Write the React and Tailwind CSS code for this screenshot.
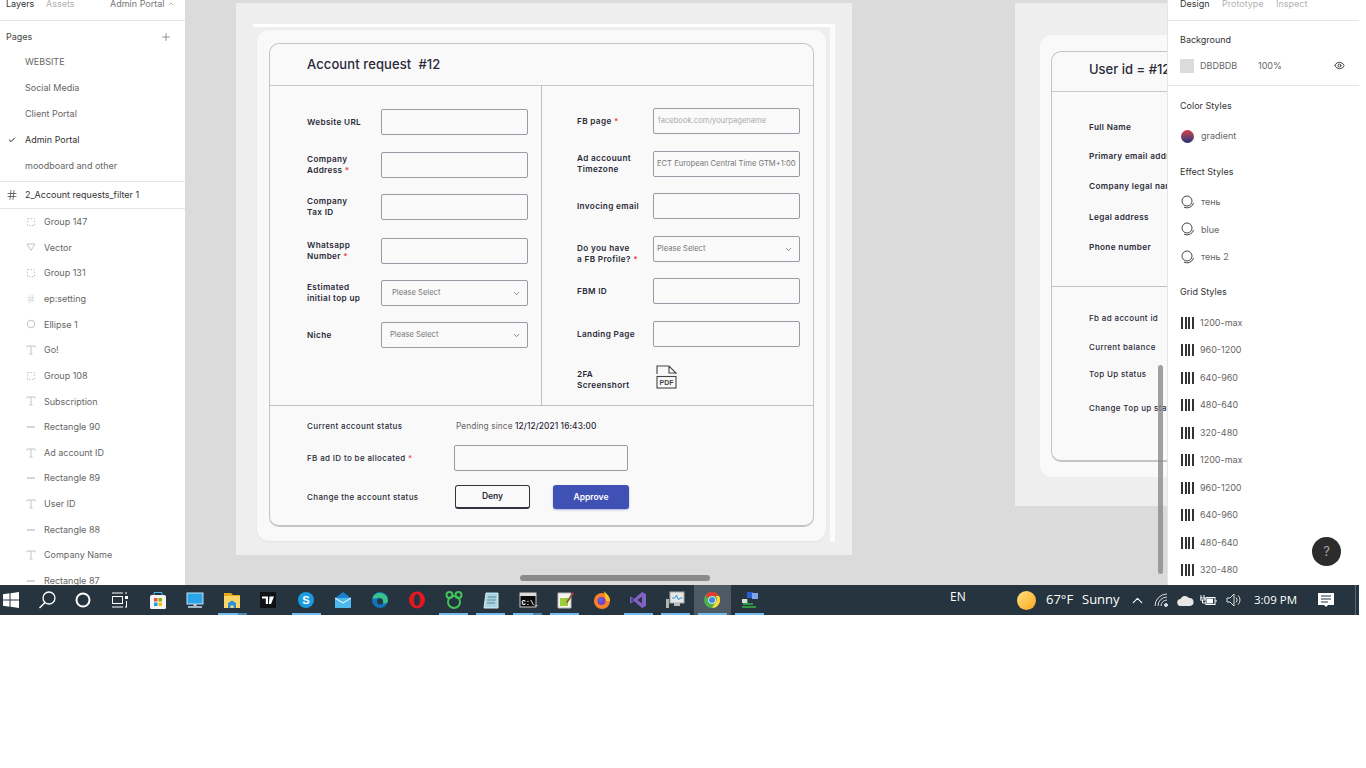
import React from "react";
import { Check, ChevronDown, ChevronUp, Eye, Hash, Plus } from "lucide-react";

const pages = ["WEBSITE", "Social Media", "Client Portal", "Admin Portal", "moodboard and other"];

const layers = [
  ["group", "Group 147"],
  ["vector", "Vector"],
  ["group", "Group 131"],
  ["frame", "ep:setting"],
  ["ellipse", "Ellipse 1"],
  ["text", "Go!"],
  ["group", "Group 108"],
  ["text", "Subscription"],
  ["line", "Rectangle 90"],
  ["text", "Ad account ID"],
  ["line", "Rectangle 89"],
  ["text", "User ID"],
  ["line", "Rectangle 88"],
  ["text", "Company Name"],
  ["line", "Rectangle 87"],
];

const gridStyles = ["1200-max", "960-1200", "640-960", "480-640", "320-480", "1200-max", "960-1200", "640-960", "480-640", "320-480"];

const font = "font-['Inter',sans-serif]";

const LayerIcon = ({ type }) => {
  if (type === "frame") return <Hash size={10} strokeWidth={1} className="text-[#b5b5b5]" />;
  return (
    <svg width="10" height="10" viewBox="0 0 10 10" fill="none" stroke="#c4c4c4" strokeWidth="1">
      {type === "group" && <rect x="1.5" y="1.5" width="7" height="7" strokeDasharray="1.5 1.5" />}
      {type === "vector" && <path d="M1 2h8L5 8.5z" />}
      {type === "ellipse" && <circle cx="5" cy="5" r="3.8" />}
      {type === "text" && <path d="M1 2.4V1h8v1.4M5 1v8M3.4 9h3.2" />}
      {type === "line" && <path d="M1 5h8" strokeWidth="1.4" />}
    </svg>
  );
};

const LeftPanel = () => (
  <aside className={`w-[185px] shrink-0 bg-white overflow-hidden ${font} text-[9px]`}>
    <div className="h-[21px] border-b border-[#e5e5e5] flex leading-[8px] pl-[6px] text-[#b3b3b3] whitespace-nowrap">
      <span className="text-[#333] w-[40px]">Layers</span>
      <span className="w-[64px]">Assets</span>
      <span className="text-[#777] w-[57px]">Admin Portal</span>
      <ChevronUp size={8} className="text-[#999]" />
    </div>
    <div className="h-[28px] pt-[3px] pl-[6px] pr-[13px] flex items-center justify-between text-[#444]">
      <span>Pages</span>
      <Plus size={12} strokeWidth={1} className="text-[#333]" />
    </div>
    <div className="pb-[2px] border-b border-[#e5e5e5]">
      {pages.map((p) => (
        <div key={p} className={`h-[26px] flex items-center relative pl-[25px] ${p === "Admin Portal" ? "text-[#333]" : "text-[#666]"}`}>
          {p === "Admin Portal" && <Check size={8} strokeWidth={3} className="absolute left-[8px] text-[#222]" />}
          {p}
        </div>
      ))}
    </div>
    <div className="h-[27px] border-b border-[#e5e5e5] flex items-center pl-[6px] gap-[7px] text-[#333]">
      <Hash size={12} strokeWidth={1.5} className="text-[#444]" />
      2_Account requests_filter 1
    </div>
    {layers.map(([type, name], i) => (
      <div key={i} className="h-[25.65px] flex items-center pl-[26px] gap-[8px] text-[#666]">
        <LayerIcon type={type} />
        {name}
      </div>
    ))}
  </aside>
);

const EffectIcon = () => (
  <svg width="14" height="14" viewBox="0 0 14 14" fill="none" stroke="#333" strokeWidth="0.9">
    <circle cx="6" cy="6" r="5" />
    <path d="M3 12.200A6.900 6.900 0 0 0 12.600 8" />
  </svg>
);

const GridIcon = () => (
  <div className="flex gap-[1.5px]">
    <span className="w-[2px] h-[12px] bg-[#333]" />
    <span className="w-[2px] h-[12px] bg-[#333]" />
    <span className="w-[2px] h-[12px] bg-[#333]" />
    <span className="w-[2px] h-[12px] bg-[#333]" />
  </div>
);

const RightPanel = () => (
  <aside className={`relative w-[192px] shrink-0 bg-white border-l border-[#e5e5e5] overflow-hidden ${font} text-[9px] text-[#666]`}>
    <div className="h-[21px] border-b border-[#e5e5e5] flex leading-[8px] pl-[12px] text-[#b3b3b3]">
      <span className="text-[#333] w-[42px]">Design</span>
      <span className="w-[54px]">Prototype</span>
      <span>Inspect</span>
    </div>
    <div className="h-[38px] flex items-center pl-[12px] text-[#333]">Background</div>
    <div className="h-[27px] pb-[13px] border-b border-[#e5e5e5] flex items-center pl-[12px]">
      <span className="w-[14px] h-[14px] bg-[#dbdbdb] mr-[6px]" />
      <span className="w-[58px]">DBDBDB</span>
      <span className="w-[76px]">100%</span>
      <Eye size={11} className="text-[#333]" />
    </div>
    <div className="h-[39px] flex items-center pl-[12px] text-[#333]">Color Styles</div>
    <div className="h-[22px] flex items-center pl-[13px] gap-[7px]">
      <span className="w-[13px] h-[13px] rounded-full bg-gradient-to-b from-[#d9363e] to-[#1c2a78]" />
      gradient
    </div>
    <div className="h-[41px] pt-[8px] flex items-center pl-[12px] text-[#333]">Effect Styles</div>
    {["тень", "blue", "тень 2"].map((n) => (
      <div key={n} className="h-[27.6px] flex items-center pl-[13px] gap-[6px]">
        <EffectIcon />
        {n}
      </div>
    ))}
    <div className="h-[38px] pt-[4px] flex items-center pl-[12px] text-[#333]">Grid Styles</div>
    {gridStyles.map((g, i) => (
      <div key={i} className="h-[27.5px] flex items-center pl-[13px] gap-[6.5px]">
        <GridIcon />
        {g}
      </div>
    ))}
    <div className="absolute left-[144px] top-[537px] w-[29px] h-[29px] rounded-full bg-[#2c2c2c] text-[#aaa] text-[13px] flex items-center justify-center">?</div>
  </aside>
);

const label = "font-semibold text-[8.2px] tracking-[0.35px] leading-[11px] text-[#2a2a38]";
const labelMedium = "font-medium text-[8px] tracking-[0.35px] leading-[11px] text-[#2a2a38]";
const Star = () => <span className="text-[#ef4444]"> *</span>;

const Field = ({ className = "", width = "w-[147px]", children }) => (
  <div className={`${width} h-[26px] shrink-0 rounded-[2px] border border-[#9a9aa5] bg-[#fafafa] flex items-center text-[7.6px] text-[#777] ${className}`}>
    {children}
  </div>
);

const SelectField = ({ pad }) => (
  <Field className={`justify-between pr-[6px] ${pad}`}>
    Please Select
    <ChevronDown size={9} strokeWidth={1.5} className="text-[#333] mt-[1px]" />
  </Field>
);

const Row = ({ text, className = "", children, w = "w-[74px]", labelClass = "" }) => (
  <div className={`flex items-center h-[26px] ${className}`}>
    <div className={`${w} shrink-0 ${label} ${labelClass}`}>{text}</div>
    {children}
  </div>
);

const PdfIcon = () => (
  <svg width="21" height="24" viewBox="0 0 21 24" fill="none" stroke="#444" strokeWidth="1.1">
    <path d="M1 9V1h12l7 7v1M13 1v7h7" />
    <rect x="1" y="11.500" width="19" height="11.500" />
    <text x="10.500" y="20" textAnchor="middle" fontSize="7" fontWeight="700" fontFamily="'Liberation Sans',sans-serif" fill="#444" stroke="none">PDF</text>
  </svg>
);

const RequestFrame = () => (
  <section className="relative w-[616px] h-[552px] shrink-0 ml-[51px] mt-[3px] bg-[#eeeeee] pt-[27px] pl-[21px]">
    <div className="absolute left-[17px] top-[21px] w-[582px] h-[3px] bg-white" />
    <div className="absolute left-[594px] top-[21px] w-[5px] h-[518px] bg-[#fbfbfb]" />
    <div className={`relative w-[569px] h-[511px] rounded-xl bg-[#f9f9f9] pl-[12px] pt-[13px] shadow-[0_1px_2px_rgba(0,0,0,0.06)] ${font}`}>
      <div className="w-[545px] h-[484px] rounded-[10px] border border-[#c4c4c8] border-b-2">
        <div className="h-[42px] border-b border-[#c8c8cc] flex items-center pl-[37px] text-[13px] tracking-[0.1px] font-medium text-[#2a2a38] whitespace-pre">
          Account request  #12
        </div>
        <div className="flex h-[320px] border-b border-[#c0c0c4]">
          <div className="w-[272px] border-r border-[#c0c0c4] pl-[37px] pt-[23px]">
            <Row text="Website URL"><Field /></Row>
            <Row text={<>Company<br />Address<Star /></>} className="mt-[17px]"><Field /></Row>
            <Row text={<>Company<br />Tax ID</>} className="mt-[16px]"><Field /></Row>
            <Row text={<>Whatsapp<br />Number<Star /></>} className="mt-[18px]"><Field /></Row>
            <Row text={<>Estimated<br />initial top up</>} className="mt-[16px]"><SelectField pad="pl-[10px]" /></Row>
            <Row text="Niche" className="mt-[16px]"><SelectField pad="pl-[8px]" /></Row>
          </div>
          <div className="flex-1 pl-[35px] pt-[22px]">
            <Row text={<>FB page<Star /></>} w="w-[76px]"><Field className="pl-[4px] text-[#aaa]">facebook.com/yourpagename</Field></Row>
            <Row text={<>Ad accouunt<br />Timezone</>} w="w-[76px]" className="mt-[17px]"><Field className="pl-[3px] whitespace-nowrap overflow-hidden">ECT European Central Time GTM+1:00</Field></Row>
            <Row text="Invocing email" w="w-[76px]" className="mt-[16px]"><Field /></Row>
            <Row text={<>Do you have<br />a FB Profile?<Star /></>} w="w-[76px]" labelClass="mt-[9px]" className="mt-[17px]"><SelectField pad="pl-[3px]" /></Row>
            <Row text="FBM ID" w="w-[76px]" className="mt-[16px]"><Field /></Row>
            <Row text="Landing Page" w="w-[76px]" className="mt-[17px]"><Field /></Row>
            <Row text={<>2FA<br />Screenshort</>} w="w-[79px]" labelClass="mt-[5px]" className="mt-[17px]"><PdfIcon /></Row>
          </div>
        </div>
        <div className="pl-[37px] pt-[14px]">
          <div className="flex items-center h-[12px]">
            <div className={`w-[149px] ${labelMedium}`}>Current account status</div>
            <div className="text-[8.3px] text-[#666] tracking-[0.1px]">Pending since <span className="text-[#2a2a38] font-medium">12/12/2021 16:43:00</span></div>
          </div>
          <div className="flex items-center mt-[13px]">
            <div className={`w-[147px] ${labelMedium}`}>FB ad ID to be allocated<Star /></div>
            <Field width="w-[174px]" />
          </div>
          <div className="flex items-center mt-[14px]">
            <div className={`w-[148px] ${labelMedium}`}>Change the account status</div>
            <button className="w-[75px] h-[24px] rounded-[3px] border border-[#33333f] border-b-2 bg-[#fafafa] text-[8.5px] font-semibold text-[#2a2a38]">Deny</button>
            <button className="w-[76px] h-[24px] ml-[23px] rounded-[3px] bg-[#3f51b5] text-[8.5px] font-semibold text-white shadow-[0_1px_2px_rgba(63,81,181,0.4)]">Approve</button>
          </div>
        </div>
      </div>
    </div>
  </section>
);

const UserLine = ({ text, className = "", medium }) => (
  <div className={`h-[12px] flex items-center whitespace-nowrap ${medium ? labelMedium : label} ${className}`}>{text}</div>
);

const UserFrame = () => (
  <section className="w-[616px] h-[503px] shrink-0 ml-[163px] mt-[3px] bg-[#eeeeee] pt-[32px] pl-[25px]">
    <div className={`w-[560px] h-[442px] rounded-xl bg-[#f9f9f9] pl-[11px] pt-[16px] ${font}`}>
      <div className="w-[540px] h-[411px] rounded-[10px] border border-[#c4c4c8] border-b-2">
        <div className="h-[40px] pb-[3px] border-b border-[#c8c8cc] flex items-center pl-[37px] text-[13px] font-medium text-[#2a2a38]">User id = #12</div>
        <div className="h-[195px] border-b border-[#c0c0c4] pl-[37px] pt-[29px]">
          <UserLine text="Full Name" />
          <UserLine text="Primary email address" className="mt-[17px]" />
          <UserLine text="Company legal name" className="mt-[18px]" />
          <UserLine text="Legal address" className="mt-[19px]" />
          <UserLine text="Phone number" className="mt-[18px]" />
        </div>
        <div className="pl-[37px] pt-[25px]">
          <UserLine text="Fb ad account id" medium />
          <UserLine text="Current balance" medium className="mt-[17px]" />
          <UserLine text="Top Up status" medium className="mt-[15px]" />
          <UserLine text="Change Top up status" medium className="mt-[22px]" />
        </div>
      </div>
    </div>
  </section>
);

const Canvas = () => (
  <main className="relative flex-1 bg-[#dbdbdb] flex items-start overflow-hidden">
    <RequestFrame />
    <UserFrame />
    <div className="absolute left-[335px] top-[575px] w-[190px] h-[6px] rounded-full bg-[#8a8a8a]" />
    <div className="absolute left-[973px] top-[365px] w-[5px] h-[209px] rounded-full bg-[#8a8a8a]/80" />
  </main>
);

const Svg = ({ children, w = 20, h = 20 }) => (
  <svg width={w} height={h} viewBox={`0 0 ${w} ${h}`} fill="none">{children}</svg>
);

const icons = [
  { key: "search", el: <Svg><circle cx="12" cy="8" r="6" stroke="#fff" strokeWidth="1.3" /><path d="M8 12.5 2.5 18" stroke="#fff" strokeWidth="1.5" /></Svg> },
  { key: "cortana", el: <Svg><circle cx="9" cy="10" r="6.5" stroke="#fff" strokeWidth="2" /></Svg> },
  { key: "tasks", el: <Svg><path d="M1 3h11M1 17h11M14 3h2M14 17h2" stroke="#fff" /><rect x="1.500" y="6.500" width="10" height="7" stroke="#fff" /><rect x="14" y="6" width="3" height="3" fill="#fff" /><path d="M15.500 11v6" stroke="#fff" /></Svg> },
  { key: "store", el: <Svg><path d="M6 5V2.5h8V5" stroke="#4fb3e8" /><rect x="2" y="5" width="16" height="14" rx="1.5" fill="#f4f4f4" /><rect x="6" y="8" width="3.5" height="3.5" fill="#e8542f" /><rect x="10.5" y="8" width="3.5" height="3.5" fill="#7fba00" /><rect x="6" y="12.5" width="3.5" height="3.5" fill="#1ba1e2" /><rect x="10.5" y="12.5" width="3.5" height="3.5" fill="#fbbc09" /></Svg> },
  { key: "desktop", el: <Svg><rect x="2" y="3" width="16" height="11" fill="#2aa5e8" stroke="#bfe3f5" /><rect x="8.5" y="14" width="3" height="2" fill="#ccc" /><rect x="3" y="16" width="14" height="2" fill="#9fb8c6" /></Svg>, line: "none" },
  { key: "folder", el: <Svg><path d="M2 3h7l2 2h7v13H2z" fill="#e8a91f" /><rect x="2" y="6" width="16" height="12" fill="#fbd467" /><path d="M6 18v-5l4-2.5 4 2.5v5h-2.5v-2.5h-3V18z" fill="#2d8fdc" /></Svg>, line: "on", stacked: true },
  { key: "tv", el: <Svg><rect x="1" y="2" width="16" height="16" fill="#111118" /><path d="M3 6.5h6V14H6.8V8.5H3zM10.5 6.5h4.5L12 14H9.8z" fill="#fff" /></Svg> },
  { key: "skype", el: <Svg><circle cx="10" cy="10" r="8" fill="#1a9ae0" /><text x="10" y="14" textAnchor="middle" fontSize="11" fontWeight="700" fontFamily="'Liberation Sans',sans-serif" fill="#fff">S</text></Svg>, line: "on" },
  { key: "mail", el: <Svg><path d="M2 8 10 2l8 6v10H2z" fill="#1c7fd0" /><path d="M2 8h16v10H2z" fill="#4fb8ef" /><path d="m2 8 8 5 8-5" stroke="#fff" strokeWidth="1" /></Svg> },
  { key: "edge", el: <Svg><circle cx="10" cy="10" r="8" fill="#1173b8" /><path d="M2.5 8A8 8 0 0 1 18 11c0 2-3 3-5 2 1-3-2-6-5-5-3 .5-4 1-5.500 0z" fill="#39c38a" /><circle cx="10" cy="11.500" r="3" fill="#26353f" /></Svg> },
  { key: "opera", el: <Svg><ellipse cx="10" cy="10" rx="8" ry="8.500" fill="#e6171f" /><ellipse cx="10" cy="10" rx="3.200" ry="6" fill="#26353f" /></Svg> },
  { key: "green", el: <Svg><circle cx="10" cy="12" r="6" stroke="#3fc45a" strokeWidth="2" /><circle cx="5.500" cy="5" r="3" stroke="#3fc45a" strokeWidth="2" /><circle cx="14.500" cy="5" r="3" stroke="#3fc45a" strokeWidth="2" /></Svg>, line: "on" },
  { key: "pad", el: <Svg><path d="M5 3h12v15H3z" fill="#a9d3e0" stroke="#dbeef4" /><path d="M6 2.500h11M7 7h8M6.500 10h8M6 13h8" stroke="#5d8ca0" /></Svg>, line: "on" },
  { key: "cmd", el: <Svg><rect x="2" y="3" width="16" height="14" fill="#0c0c0c" stroke="#ccc" /><rect x="2" y="3" width="16" height="3" fill="#ddd" /><text x="3.500" y="14.500" fontSize="7" fontFamily="'Liberation Mono',monospace" fontWeight="700" fill="#fff">C:\_</text></Svg>, line: "on", stacked: true },
  { key: "npp", el: <Svg><path d="M3 3h13v15H3z" fill="#f5f5f0" stroke="#bbb" /><path d="M5 8h8v8H5z" fill="#9ccc3c" /><path d="m11 12 6-9 1.500 1-6 9z" fill="#8a5a2b" /><path d="m17 3 1.500 1" stroke="#c33" strokeWidth="2" /></Svg>, line: "on" },
  { key: "firefox", el: <Svg><circle cx="10" cy="11" r="8" fill="#f9812a" /><path d="M12 1c3 3 6 6 6 10h-4z" fill="#fcc02d" /><circle cx="9.500" cy="11" r="4" fill="#7d3fc0" /><circle cx="8.500" cy="10" r="2" fill="#4a6cf0" /></Svg> },
  { key: "vs", el: <Svg><path d="M14 2 18 4v12l-4 2-8-7-3 2.500-1-.7V7.200l1-.7L6 9z" fill="#8661c5" /><path d="M14 6.500 9.500 10 14 13.500z" fill="#26353f" /><path d="M3.500 8v4L5.500 10z" fill="#26353f" /></Svg>, line: "on" },
  { key: "monitor", el: <Svg><rect x="5" y="2" width="14" height="11" fill="#e6e6e6" stroke="#aaa" /><path d="M7 8h3l1.500-3 2 5 1.500-2h2.500" stroke="#3a9ad9" /><rect x="1" y="9" width="3" height="9" fill="#b0b6b0" /><path d="M9 13h6v3H9z" fill="#bbb" /></Svg>, line: "on" },
  { key: "chrome", el: <Svg><circle cx="10" cy="10" r="8" fill="#4caf50" /><path d="M10 2a8 8 0 0 1 7 4H10a4 4 0 0 0-3.500 2L3.500 5.500A8 8 0 0 1 10 2" fill="#e53935" /><path d="M17 6a8 8 0 0 1-7 12l3.500-6a4 4 0 0 0 0-6z" fill="#fdd835" /><circle cx="10" cy="10" r="3.800" fill="#fff" /><circle cx="10" cy="10" r="3" fill="#3f86e8" /></Svg>, line: "on", active: true },
  { key: "network", el: <Svg><rect x="8" y="2" width="6" height="6" fill="#2b5fd0" /><rect x="13" y="3" width="6" height="6" fill="#7fa6e8" /><path d="M4 14h10M3 17h14M8 9v5" stroke="#36b34a" strokeWidth="1.500" /><rect x="3" y="9" width="5" height="4" fill="#dcdcdc" /></Svg>, line: "on" },
];

const Taskbar = () => (
  <footer className={`h-[30px] w-[1359px] bg-[#25343e] flex items-center text-white font-['Open_Sans',sans-serif]`}>
    <div className="w-[29px] flex justify-center pr-[7px]">
      <svg width="16" height="16" viewBox="0 0 16 16" fill="#fff">
        <path d="M0 2.300 6.500 1.300V7.500H0zM7.500 1.200 16 0V7.500H7.500zM0 8.500h6.500v6.200L0 13.700zM7.500 8.500H16V16L7.500 14.800z" />
      </svg>
    </div>
    <div className="flex w-[739px]">
      {icons.map((ic) => (
        <div key={ic.key} className={`relative w-[36.950px] h-[30px] flex items-center justify-center ${ic.active ? "bg-[#4d5a63]" : ""}`}>
          {ic.el}
          {ic.line === "on" && <span className="absolute bottom-0 left-[4px] right-[4px] h-[2px] bg-[#76b9ed]" />}
          {ic.stacked && <span className="absolute bottom-0 right-[4px] w-[9px] h-[2px] bg-[#4f86ad]" />}
        </div>
      ))}
    </div>
    <span className="ml-[182px] text-[12px] w-[16px] -mt-[6px]">EN</span>
    <span className="ml-[51px] w-[19px] h-[19px] rounded-full bg-gradient-to-br from-[#ffe27a] to-[#f9a602]" />
    <span className="ml-[10px] text-[13px] w-[27px] whitespace-nowrap">67°F</span>
    <span className="ml-[9px] text-[13px] w-[38px]">Sunny</span>
    <ChevronUp size={17} strokeWidth={1.5} className="ml-[9px]" />
    <svg width="16" height="14" viewBox="0 0 16 14" fill="none" stroke="#ddd" className="ml-[8px]">
      <path d="M1 13A12 12 0 0 1 13 1M4 13A9 9 0 0 1 13 4M7 13A6 6 0 0 1 13 7" />
      <circle cx="12" cy="12" r="1.500" fill="#ddd" />
    </svg>
    <svg width="17" height="11" viewBox="0 0 17 11" fill="#e8e8e8" className="ml-[7px]">
      <path d="M4 11a3.500 3.500 0 0 1-.5-7A5 5 0 0 1 12 3a4 4 0 0 1 1 8z" />
    </svg>
    <svg width="17" height="13" viewBox="0 0 17 13" fill="none" stroke="#fff" className="ml-[6px]">
      <path d="M1 1v3M4 1v3M0 4h5v2H0zM2.500 6v3H6" />
      <rect x="6" y="3.500" width="9" height="7" />
      <rect x="7" y="4.500" width="6" height="5" fill="#fff" stroke="none" />
      <path d="M16 6v2" />
    </svg>
    <svg width="16" height="14" viewBox="0 0 16 14" fill="none" stroke="#ddd" className="ml-[9px]">
      <path d="M1 5h3l4-4v12L4 9H1zM10 4.500a3.500 3.500 0 0 1 0 5M12 2.500a6 6 0 0 1 0 9" />
    </svg>
    <span className="ml-[12px] w-[43px] text-[11.5px] whitespace-nowrap">3:09 PM</span>
    <svg width="16" height="15" viewBox="0 0 16 15" fill="#fff" className="ml-[21px]">
      <path d="M0 0h16v12h-6l-2 2-2-2H0z" />
      <path d="M3 3h10M3 6h10M3 9h7" stroke="#25343e" />
    </svg>
    <span className="ml-[21px] w-[1px] self-stretch bg-[#5a666e]" />
  </footer>
);

export default function App() {
  return (
    <div className="w-[1366px] h-[768px] bg-white overflow-hidden">
      <div className="flex h-[585px] w-[1359px]">
        <LeftPanel />
        <Canvas />
        <RightPanel />
      </div>
      <Taskbar />
    </div>
  );
}
